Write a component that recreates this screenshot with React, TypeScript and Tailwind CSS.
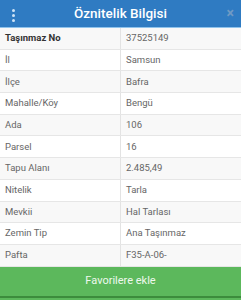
import React from "react";

const rows: [string, string][] = [
  ["Taşınmaz No", "37525149"],
  ["İl", "Samsun"],
  ["İlçe", "Bafra"],
  ["Mahalle/Köy", "Bengü"],
  ["Ada", "106"],
  ["Parsel", "16"],
  ["Tapu Alanı", "2.485,49"],
  ["Nitelik", "Tarla"],
  ["Mevkii", "Hal Tarlası"],
  ["Zemin Tip", "Ana Taşınmaz"],
  ["Pafta", "F35-A-06-"],
];

export default function App() {
  return (
    <div className="w-[241px] h-[300px] flex flex-col bg-white overflow-hidden" style={{ fontFamily: "Roboto, 'Noto Sans', sans-serif" }}>
      <div className="h-[28px] bg-[#2f7bc2] border-b border-[#8fc3ec] flex items-center relative shrink-0">
        <div className="absolute left-[12px] top-[9px] flex flex-col gap-[2px]">
          <span className="w-[3px] h-[3px] rounded-full bg-[#cfe3f5]"></span>
          <span className="w-[3px] h-[3px] rounded-full bg-[#cfe3f5]"></span>
          <span className="w-[3px] h-[3px] rounded-full bg-[#cfe3f5]"></span>
        </div>
        <div className="flex-1 text-center text-white text-[13.5px] font-medium leading-none">Öznitelik Bilgisi</div>
        <div className="absolute right-[7px] top-[6px] text-[#6f9ac4] text-[14px] leading-none font-bold">×</div>
      </div>
      <div className="flex flex-col">
        {rows.map(([k, v], i) => (
          <div key={k} className={`flex h-[21.7px] border-b border-[#e6e6e6] ${i % 2 === 0 ? "bg-[#f8f8f8]" : "bg-white"}`}>
            <div className={`w-[121px] border-r border-[#e3e3e3] pl-[5px] flex items-center text-[9.5px] ${i === 0 ? "font-bold text-[#333]" : "text-[#666]"}`}>{k}</div>
            <div className="flex-1 pl-[5px] flex items-center text-[9.5px] text-[#666]">{v}</div>
          </div>
        ))}
      </div>
      <div className="h-[29px] bg-[#5cb85c] flex items-center justify-center text-[#eef8ee] text-[11px] shrink-0">Favorilere ekle</div>
      <div className="h-[2px] bg-[#3c8c3c] shrink-0"></div>
      <div className="flex-1 bg-[#5cb85c]"></div>
    </div>
  );
}
